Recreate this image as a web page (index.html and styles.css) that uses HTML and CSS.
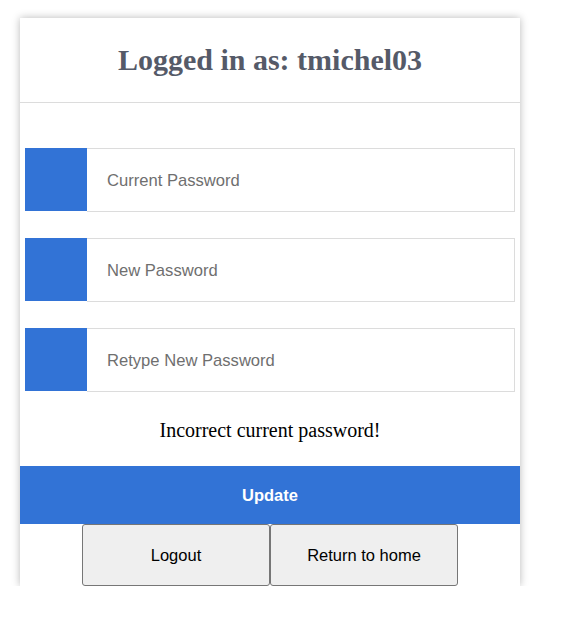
FILE: index.html
```html
<!DOCTYPE html>
<html>
<head>
<meta charset="utf-8">
<link rel="stylesheet" href="styles.css">
</head>
<body>
<div class="card">
  <div class="header">
    <h1 class="title">Logged in as: tmichel03</h1>
  </div>
  <form class="form">
    <div class="row"><span class="icon"></span><input class="field" type="password" placeholder="Current Password"></div>
    <div class="row"><span class="icon"></span><input class="field" type="password" placeholder="New Password"></div>
    <div class="row"><span class="icon"></span><input class="field" type="password" placeholder="Retype New Password"></div>
  </form>
  <p class="message">Incorrect current password!</p>
  <button class="update" type="button">Update</button>
  <div class="actions">
    <button class="btn" type="button">Logout</button>
    <button class="btn" type="button">Return to home</button>
  </div>
</div>
</body>
</html>
```

FILE: styles.css
```css
html, body {
  margin: 0;
  padding: 0;
  background: #fff;
}
.card {
  margin: 18px 0 0 20px;
  width: 500px;
  background: #fff;
  box-shadow: 0 0 8px rgba(0, 0, 0, 0.28);
}
.header {
  height: 84px;
  border-bottom: 1px solid #dcdcdc;
  display: flex;
  align-items: center;
  justify-content: center;
}
.title {
  margin: 0;
  font-family: "Liberation Serif", serif;
  font-weight: bold;
  font-size: 30px;
  color: #555a68;
}
.form {
  margin: 0;
  padding: 45px 5px 0;
  display: flex;
  flex-direction: column;
  gap: 26px;
}
.row {
  display: flex;
  align-items: flex-start;
  height: 64px;
}
.icon {
  width: 62px;
  height: 63px;
  background: #3273d6;
  flex: none;
}
.field {
  flex: 1;
  box-sizing: border-box;
  height: 64px;
  margin: 0;
  border: 1px solid #dcdcdc;
  border-left: none;
  padding: 2px 0 0 20px;
  font-family: "Liberation Sans", Arial, sans-serif;
  font-size: 16.6px;
  outline: none;
  background: #fff;
}
.field::placeholder {
  color: #6f6f6f;
}
.message {
  margin: 0;
  height: 74px;
  padding-top: 2px;
  box-sizing: border-box;
  display: flex;
  align-items: center;
  justify-content: center;
  font-family: "Liberation Serif", serif;
  font-size: 20px;
  color: #000;
}
.update {
  display: block;
  width: 100%;
  height: 58px;
  margin: 0;
  border: none;
  background: #3273d6;
  color: #fff;
  font-family: "Liberation Sans", Arial, sans-serif;
  font-weight: bold;
  font-size: 16.5px;
}
.actions {
  display: flex;
  justify-content: center;
}
.btn {
  width: 188px;
  height: 62px;
  margin: 0;
  background: #efefef;
  border: 1px solid #767676;
  border-radius: 3px;
  font-family: "Liberation Sans", Arial, sans-serif;
  font-size: 16.5px;
  color: #000;
}
```
